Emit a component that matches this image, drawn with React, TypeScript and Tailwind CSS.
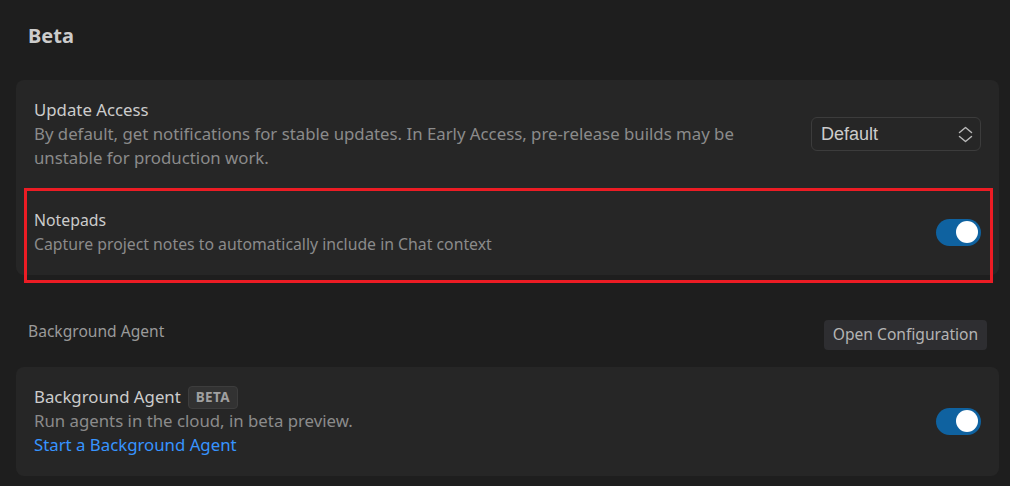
const font = { fontFamily: '"Segoe UI", "Noto Sans", sans-serif' };

function Toggle({ on }: { on: boolean }) {
  return (
    <div
      className={`flex h-[27px] w-[45px] shrink-0 items-center rounded-full px-[3px] ${
        on ? 'justify-end bg-[#0f62a0]' : 'justify-start bg-[#444]'
      }`}
    >
      <div className="h-[22px] w-[22px] rounded-full bg-white" />
    </div>
  );
}

function UpDown() {
  return (
    <svg width="15" height="17" viewBox="0 0 15 17" fill="none" aria-hidden="true">
      <path
        d="M1.5 6.5L7.5 1.5L13.5 6.5M1.5 10.5L7.5 15.5L13.5 10.5"
        stroke="#b8b8b8"
        strokeWidth="1.5"
        strokeLinecap="round"
        strokeLinejoin="round"
      />
    </svg>
  );
}

function Row({
  title,
  desc,
  size = 'text-[16.8px]',
  children,
}: {
  title: React.ReactNode;
  desc: React.ReactNode;
  size?: string;
  children: React.ReactNode;
}) {
  return (
    <div className="flex items-center justify-between gap-6">
      <div className={`flex flex-col leading-6 ${size}`}>
        <div className="text-[#cccccc]">{title}</div>
        <div className="text-[#8b8b8b]">{desc}</div>
      </div>
      {children}
    </div>
  );
}

export default function App() {
  return (
    <div className="min-h-screen bg-[#1e1e1e] pl-4 pr-[11px] pt-[22px]" style={font}>
      <h2 className="pl-3 text-[20px] font-bold leading-7 text-[#cccccc]">Beta</h2>

      <div className="mt-[30px] flex flex-col gap-[38px] rounded-lg bg-[#262626] px-[18px] pb-[19px] pt-[18px]">
        <Row
          title="Update Access"
          desc={
            <>
              By default, get notifications for stable updates. In Early Access, pre-release builds may be
              <br />
              unstable for production work.
            </>
          }
        >
          <div
            className="flex h-[34px] w-[170px] items-center justify-between rounded-md border border-[#3c3c3c] pl-[9px] pr-[7px] text-[18px] text-[#cccccc]"
            style={{ fontFamily: '"Liberation Sans", Arial, sans-serif' }}
          >
            Default
            <UpDown />
          </div>
        </Row>

        <div className="relative">
          <Row title="Notepads" desc="Capture project notes to automatically include in Chat context" size="text-[15.8px]">
            <Toggle on />
          </Row>
          <div className="pointer-events-none absolute -bottom-[27px] -left-[10px] -right-[12px] -top-[20px] border-[3px] border-[#ec1c24]" />
        </div>
      </div>

      <div className="mt-[45px] flex items-center justify-between px-3">
        <span className="-mt-[6px] text-[15.6px] text-[#9a9a9a]">Background Agent</span>
        <button
          type="button"
          className="h-[30px] w-[163px] rounded bg-[#2e2e31] text-[15.6px] text-[#b4b4b4]"
        >
          Open Configuration
        </button>
      </div>

      <div className="mt-[17px] rounded-lg bg-[#262626] px-[18px] pb-[19px] pt-[18px]">
        <Row
          title={
            <span className="flex items-center gap-[7px]">
              Background Agent
              <span className="flex h-[23px] items-center rounded border border-[#3d3d3d] bg-[#323232] px-[7px] text-[13.5px] font-bold tracking-wide text-[#a0a0a0]">
                BETA
              </span>
            </span>
          }
          desc={
            <>
              Run agents in the cloud, in beta preview.
              <br />
              <span className="text-[#3794ff]">Start a Background Agent</span>
            </>
          }
        >
          <Toggle on />
        </Row>
      </div>
    </div>
  );
}
